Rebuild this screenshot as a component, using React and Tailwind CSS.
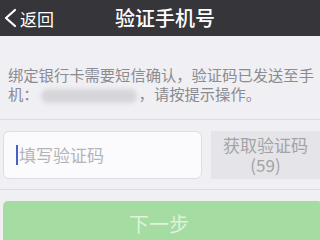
export default function App() {
  return (
    <div
      className="w-[320px] h-[240px] overflow-hidden bg-[#efeff4] flex flex-col"
      style={{ fontFamily: '"Noto Sans CJK SC", "Noto Sans", sans-serif' }}
    >
      <header className="h-[36px] shrink-0 bg-[#36353a] flex items-center relative">
        <div className="flex items-center pl-[3px] text-white">
          <svg width="14" height="20" viewBox="0 0 14 20" fill="none">
            <path d="M12 2 L3 10 L12 18" stroke="white" strokeWidth="2.2" strokeLinecap="round" strokeLinejoin="round" />
          </svg>
          <span className="ml-[3px] text-[17px] leading-none">返回</span>
        </div>
        <h1 className="absolute left-[115px] top-[3px] text-[20px] leading-[30px] text-white font-medium">验证手机号</h1>
      </header>

      <div className="h-[29px] shrink-0" />
      <p className="pl-[8px] pr-[1px] text-[15.3px] leading-[19px] text-[#8b8b90]">
        绑定银行卡需要短信确认，验证码已发送至手机：
        <span className="inline-block align-middle w-[96px] h-[14px] mx-[2px] rounded-full bg-[#d6d6da] blur-[2px]" />
        ，请按提示操作。
      </p>
      <div className="mt-[16px] h-px bg-[#dcdce0] shrink-0" />

      <div className="flex items-stretch gap-[9px] pl-[3px] mt-[11px] h-[48px] shrink-0">
        <div className="w-[199px] rounded-[6px] bg-[#fbfbfd] border border-[#dedee2] flex items-center pl-[12px]">
          <span className="w-[2px] h-[20px] bg-[#4560c8] mr-[1px]" />
          <span className="text-[17px] text-[#b4b4b8]">填写验证码</span>
        </div>
        <div className="flex-1 bg-[#e5e5e9] flex flex-col items-center justify-center text-[#a3a3a7] text-[17px] leading-[20px]">
          <span>获取验证码</span>
          <span>(59)</span>
        </div>
      </div>
      <div className="mt-[10px] h-px bg-[#dcdce0] shrink-0" />

      <button className="mt-[11px] ml-[3px] w-[320px] h-[50px] shrink-0 rounded-[5px] bg-[#a4dca1] text-[#def2dc] text-[20px] flex items-start justify-center pt-[8px] pr-[8px]">
        下一步
      </button>
    </div>
  );
}
